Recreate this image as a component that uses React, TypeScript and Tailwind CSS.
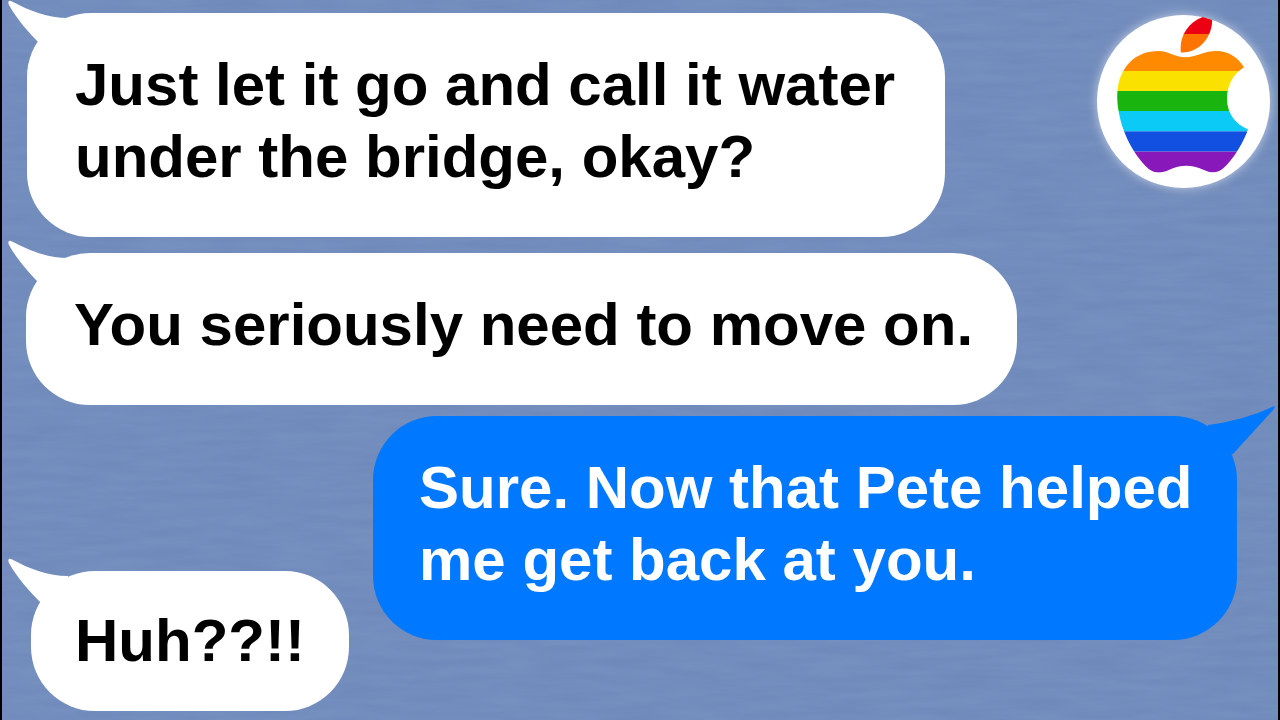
import { cva } from 'class-variance-authority';

type Message = {
  id: number;
  from: 'them' | 'me';
  size: 'wide' | 'full' | 'reply' | 'short';
  text: string;
};

const messages: Message[] = [
  { id: 1, from: 'them', size: 'wide', text: 'Just let it go and call it water under the bridge, okay?' },
  { id: 2, from: 'them', size: 'full', text: 'You seriously need to move on.' },
  { id: 3, from: 'me', size: 'reply', text: 'Sure. Now that Pete helped me get back at you.' },
  { id: 4, from: 'them', size: 'short', text: 'Huh??!!' },
];

const row = cva('relative flex', {
  variants: {
    size: {
      wide: 'justify-start pl-[19px]',
      full: 'mt-4 justify-start pl-[18px]',
      reply: 'mt-[11px] justify-end pr-[38px]',
      short: '-mt-[69px] justify-start pl-[23px]',
    },
  },
});

const bubble = cva('w-fit rounded-[64px] text-[60px] leading-[72px] font-bold', {
  variants: {
    from: {
      them: 'bg-white text-black',
      me: 'bg-[#0078ff] text-white',
    },
    size: {
      wide: 'max-w-[918px] pt-9 pr-10 pb-11 pl-12',
      full: 'pt-9 pr-11 pb-11 pl-12',
      reply: 'max-w-[864px] pt-9 pr-10 pb-11 pl-[46px]',
      short: 'py-[34px] pr-11 pl-11',
    },
  },
});

const leafStripes = [
  { y: 40, height: 62, color: '#ec0013' },
  { y: 102, height: 58, color: '#ff7300' },
];

const bodyStripes = [
  { y: 145, height: 68, color: '#ff8a00' },
  { y: 213, height: 60, color: '#fae100' },
  { y: 273, height: 60, color: '#1ab40f' },
  { y: 333, height: 61, color: '#0bcaf6' },
  { y: 394, height: 61, color: '#1150e0' },
  { y: 455, height: 70, color: '#8918ba' },
];

// Faint horizontal grain over the flat blue
function Backdrop() {
  return (
    <svg className="absolute inset-0 size-full" aria-hidden="true">
      <filter id="brushed" x="0" y="0" width="100%" height="100%" colorInterpolationFilters="sRGB">
        <feTurbulence type="fractalNoise" baseFrequency="0.015 0.12" numOctaves="3" seed="4" />
        <feColorMatrix values="0 0 0 0 0.38  0 0 0 0 0.49  0 0 0 0 0.68  0.5 0 0 0 -0.12" />
      </filter>
      <rect width="100%" height="100%" filter="url(#brushed)" />
    </svg>
  );
}

function Tail({ from }: { from: Message['from'] }) {
  if (from === 'me') {
    return (
      <svg className="absolute -top-[10px] right-0 h-[50px] w-[70px]" viewBox="0 0 70 50" fill="#0078ff" aria-hidden="true">
        <path d="M3 19C26 16 48 10 67 1Q71 -1 69 3C56 17 40 35 28 48L4 46Z" />
      </svg>
    );
  }
  return (
    <svg className="absolute -top-[13px] left-0 h-[50px] w-[70px]" viewBox="0 0 70 50" fill="white" aria-hidden="true">
      <path d="M3 1C22 11 40 18 60 18L62 45L33 45C21 33 8 18 1 5Q-1 0 3 1Z" />
    </svg>
  );
}

function Avatar() {
  return (
    <div className="absolute top-[15px] right-2 size-[173px] rounded-full bg-white shadow-[0_0_10px_1px_rgba(255,255,255,0.5)]">
      <svg className="size-full" viewBox="51 45 519 519" role="img" aria-label="Rainbow apple">
        <clipPath id="leaf">
          <path d="M302 158C297 112 322 68 368 51L397 60C395 112 360 158 302 158Z" />
        </clipPath>
        <clipPath id="body">
          <path d="M316 172C350 172 368 153 410 153C445 153 474 172 492 202C460 222 441 255 441 297C441 340 468 375 504 388C490 430 455 485 430 505C412 521 392 519 370 509C335 493 302 493 268 509C246 519 227 522 206 507C170 475 143 425 130 388C117 350 110 310 112 280C116 200 168 153 235 153C268 153 284 172 316 172Z" />
        </clipPath>
        <g clipPath="url(#leaf)">
          {leafStripes.map((s) => (
            <rect key={s.color} x="280" y={s.y} width="130" height={s.height} fill={s.color} />
          ))}
        </g>
        <g clipPath="url(#body)">
          {bodyStripes.map((s) => (
            <rect key={s.color} x="100" y={s.y} width="420" height={s.height} fill={s.color} />
          ))}
        </g>
      </svg>
    </div>
  );
}

export default function App() {
  return (
    <main className="relative min-h-screen overflow-hidden border-x-2 border-black bg-[#758fbf] font-['Liberation_Sans',Arial,sans-serif]">
      <Backdrop />

      {/* Conversation */}
      <ul className="relative pt-[13px] pr-[3px] pb-[9px] pl-[6px]">
        {messages.map((message) => (
          <li key={message.id} className={row({ size: message.size })}>
            <Tail from={message.from} />
            <p className={bubble({ from: message.from, size: message.size })}>{message.text}</p>
          </li>
        ))}
      </ul>

      <Avatar />
    </main>
  );
}
